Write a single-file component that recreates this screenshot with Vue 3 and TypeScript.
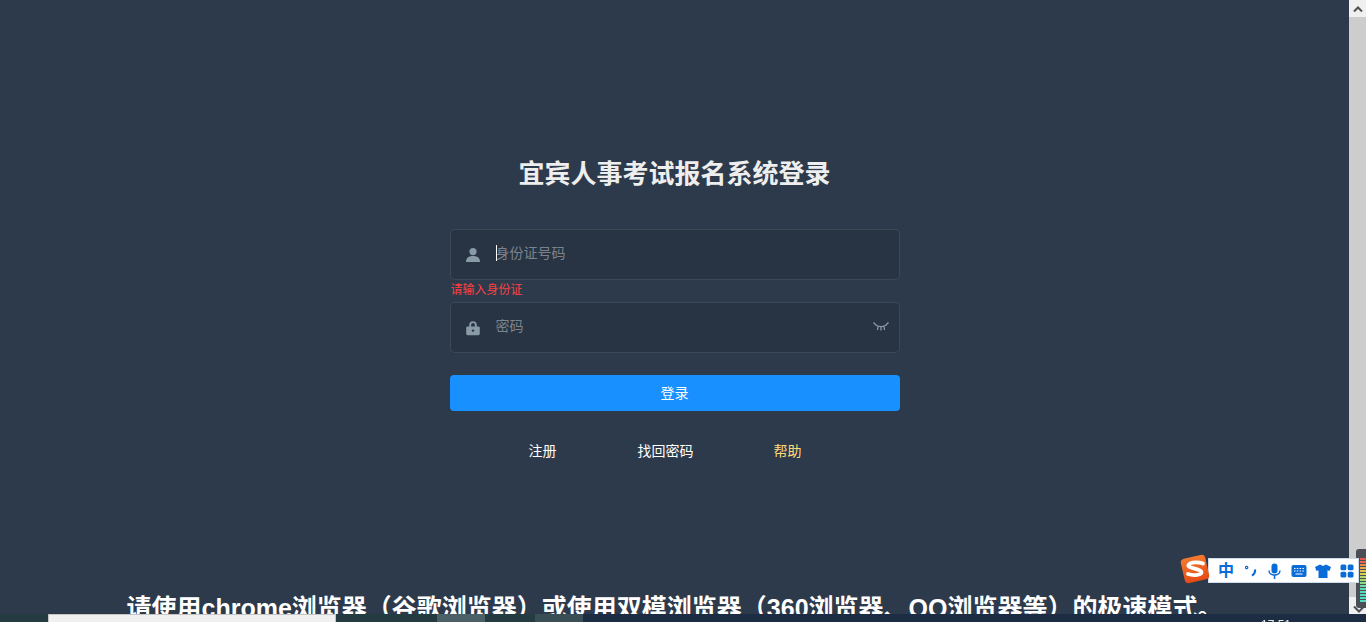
<script setup lang="ts">
const links = [
  { text: '注册', cls: 'link' },
  { text: '找回密码', cls: 'link' },
  { text: '帮助', cls: 'link help' },
]
const meter = ['#e5574f', '#e5664f', '#e58a4f', '#e5a84f', '#e5c04f', '#d8d050', '#b8d660', '#a0d870', '#86d98a', '#6fdaa0', '#5fdab0', '#55dabb', '#50dac0', '#50dac0', '#50dac0']
</script>

<template>
  <div class="screen">
    <main class="page">
      <h3 class="title">宜宾人事考试报名系统登录</h3>
      <form class="form" @submit.prevent>
        <div class="field">
          <svg class="ico" viewBox="0 0 16 16" width="16" height="16">
            <circle cx="8" cy="4.6" r="3.6" fill="#889aa4" />
            <path d="M1 15c0-4 2.4-6 7-6s7 2 7 6z" fill="#889aa4" />
          </svg>
          <span class="caret"></span>
          <span class="ph">身份证号码</span>
        </div>
        <div class="err">请输入身份证</div>
        <div class="field">
          <svg class="ico" viewBox="0 0 16 16" width="16" height="16">
            <path d="M4.2 7V5a3.8 3.8 0 0 1 7.6 0v2h-1.9V5a1.9 1.9 0 0 0-3.8 0v2z" fill="#889aa4" />
            <rect x="1.2" y="6.6" width="13.6" height="8.6" rx="1.4" fill="#889aa4" />
            <circle cx="8" cy="10.6" r="1.2" fill="#283443" />
          </svg>
          <span class="ph">密码</span>
          <svg class="eye" viewBox="0 0 16 9" width="16" height="9" fill="none" stroke="#8d9fa9" stroke-width="1.2">
            <path d="M0.5 0.5 3.500 3.500c3 1.400 6 1.400 9 0l3-3M5 4.500 4.500 8M8 5V8.500M11 4.500l.5 3.500" />
          </svg>
        </div>
        <button class="submit" type="button">登录</button>
      </form>
      <nav class="links">
        <span v-for="l in links" :key="l.text" :class="l.cls">{{ l.text }}</span>
      </nav>
      <h2 class="notice">请使用chrome浏览器（谷歌浏览器）或使用双模浏览器（360浏览器、QQ浏览器等）的极速模式。</h2>
    </main>
    <aside class="scrollbar">
      <div class="arrow">
        <svg viewBox="0 0 10 6" width="10" height="6"><path d="M1 5.500 5 1.500l4 4" fill="none" stroke="#505050" stroke-width="2" /></svg>
      </div>
      <div class="arrow end"></div>
    </aside>

    <div class="taskbar">
      <div class="win-box"></div>
      <div class="task t1"></div>
      <div class="task t2"></div>
      <span class="clock">17:51</span>
    </div>

    <div class="volume">
      <i v-for="(c, n) in meter" :key="n" class="tick" :style="{ background: c }"></i>
      <svg class="vol-arrow" viewBox="0 0 12 8" width="12" height="8"><path d="M1 1.500 6 6.500l5-5" fill="none" stroke="#4a4f55" stroke-width="2" /></svg>
    </div>

    <div class="ime">
      <svg class="ime-logo" viewBox="0 0 30 30" width="30" height="30">
        <defs>
          <linearGradient id="sg" x1="0" y1="0" x2="0" y2="1">
            <stop offset="0" stop-color="#f47a30" />
            <stop offset="1" stop-color="#e44a16" />
          </linearGradient>
        </defs>
        <rect x="2.500" y="2.500" width="25" height="25" rx="4" fill="url(#sg)" transform="rotate(-13 15 15)" />
        <path d="M23 9.500C18 7.500 10 8 8.500 11c-1.500 3.500 12.500 3.500 13 7 .4 3-7.500 4-13.500 2" fill="none" stroke="#fff" stroke-width="3.800" stroke-linecap="round" />
      </svg>
      <span class="ime-zh">中</span>
      <svg viewBox="0 0 13 13" width="13" height="13" fill="none" stroke="#0a6cd6">
        <circle cx="1.600" cy="3.500" r="1.200" stroke-width="1.200" />
        <path d="M10 5.500c.4 2.500-.6 4.500-3 6" stroke-width="2.200" />
      </svg>
      <svg viewBox="0 0 13 16" width="13" height="16" fill="#0a6cd6">
        <rect x="3.500" y="0.500" width="6" height="10" rx="3" />
        <path d="M1 7.500c0 6 11 6 11 0" fill="none" stroke="#0a6cd6" stroke-width="1.400" />
        <rect x="5.800" y="12" width="1.500" height="4" />
      </svg>
      <svg viewBox="0 0 16 14" width="16" height="14">
        <rect x="0.500" y="1" width="15" height="12" rx="2" fill="#0a6cd6" />
        <path d="M3 4.500h1.500M5.800 4.500h1.500M8.600 4.500h1.500M11.400 4.500h1.500M3 7h1.500M5.800 7h1.500M8.600 7h1.500M11.400 7h1.500M4.500 10h7" stroke="#fff" stroke-width="1.200" />
      </svg>
      <svg class="shirt" viewBox="0 0 16 14" width="16" height="14">
        <path d="M5 0.500 8 2l3-1.500 5 2.500-1.500 4-2-.7V14H3.500V6.300l-2 .7L0 3z" fill="#0a6cd6" />
      </svg>
      <svg class="grid" viewBox="0 0 14 14" width="14" height="14" fill="#0a6cd6">
        <rect x="0.500" y="0.500" width="5.800" height="5.800" rx="1.500" />
        <rect x="7.700" y="0.500" width="5.800" height="5.800" rx="1.500" />
        <rect x="0.500" y="7.700" width="5.800" height="5.800" rx="1.500" />
        <rect x="7.700" y="7.700" width="5.800" height="5.800" rx="1.500" />
      </svg>
    </div>
  </div>
</template>

<style>
html, body { margin: 0; height: 100%; overflow: hidden; }
</style>

<style scoped>
.screen {
  display: flex;
  height: 622px;
  overflow: hidden;
  font-family: "Liberation Sans", "Noto Sans CJK SC", sans-serif;
}
.page {
  flex: 1;
  background: #2d3a4b;
  display: flex;
  flex-direction: column;
  align-items: center;
  min-width: 0;
}
.title {
  margin: 158px 0 0;
  font-size: 26px;
  line-height: 32px;
  font-weight: 700;
  color: #eeeeee;
}
.form {
  width: 450px;
  margin-top: 39px;
  display: flex;
  flex-direction: column;
}
.field {
  height: 51px;
  box-sizing: border-box;
  border: 1px solid rgba(255, 255, 255, 0.1);
  border-radius: 5px;
  background: #283443;
  display: flex;
  align-items: center;
  padding-left: 14px;
  position: relative;
  font-size: 14px;
}
.ico { flex: none; margin-right: 15px; margin-top: 1px; }
.ph { color: #7b838d; margin-top: -6px; }
.caret {
  position: absolute;
  left: 45px;
  top: 15px;
  width: 1px;
  height: 16px;
  background: #ffffff;
}
.eye { position: absolute; right: 10px; top: 19px; }
.err {
  height: 22px;
  line-height: 20px;
  padding-left: 1px;
  font-size: 12px;
  color: #ff4040;
}
.submit {
  margin-top: 22px;
  height: 36px;
  border: none;
  border-radius: 4px;
  background: #1890ff;
  color: #ffffff;
  font: inherit;
  font-size: 14px;
  padding: 0 0 2px;
}
.links {
  width: 450px;
  margin-top: 30px;
  display: flex;
  padding-left: 79px;
  box-sizing: border-box;
  font-size: 14px;
  line-height: 20px;
  color: #ffffff;
}
.link:nth-child(1) { width: 109px; }
.link:nth-child(2) { width: 136px; }
.help { color: #ffd97a; }
.notice {
  margin: 131px 0 0;
  font-size: 25px;
  line-height: 32px;
  font-weight: 700;
  color: #ffffff;
  white-space: nowrap;
}
.scrollbar {
  width: 17px;
  flex: none;
  background: #cdcdcd;
  display: flex;
  flex-direction: column;
  justify-content: space-between;
  padding-bottom: 8px;
}
.arrow {
  height: 17px;
  background: #f0f0f0;
  display: flex;
  align-items: center;
  justify-content: center;
}
.taskbar {
  position: fixed;
  left: 0;
  right: 0;
  bottom: 0;
  height: 8px;
  background: linear-gradient(90deg, #243b42 0 583px, #1c2c42 583px);
}
.win-box {
  position: absolute;
  left: 48px;
  top: 0;
  width: 288px;
  height: 8px;
  box-sizing: border-box;
  background: #f0f0f0;
  border: 1px solid #c4c4c4;
  border-bottom: none;
}
.task { position: absolute; top: 0; height: 8px; }
.t1 { left: 437px; width: 48px; background: #4c6068; }
.t2 { left: 535px; width: 48px; background: #3a4e56; }
.clock {
  position: absolute;
  left: 1261px;
  top: 3px;
  font-size: 12px;
  line-height: 16px;
  color: #e8e8e8;
}
.ime {
  position: fixed;
  left: 1208px;
  top: 558px;
  width: 151px;
  height: 25px;
  box-sizing: border-box;
  border: 1px solid #cfdcec;
  background: #ffffff;
  display: flex;
  align-items: center;
  gap: 10px;
  padding-left: 9px;
}
.ime-logo { position: absolute; left: -29px; top: -5px; }
.ime-zh { color: #0a6cd6; font-size: 16px; font-weight: 700; line-height: 16px; margin-right: 1px; }
.shirt { margin-left: -2px; }
.grid { margin-left: -1px; }
.volume {
  position: fixed;
  left: 1356px;
  top: 549px;
  width: 10px;
  height: 59px;
  box-sizing: border-box;
  background: #4a4f55;
  border-radius: 3px 0 0 3px;
  padding: 9px 0 0 4px;
  display: flex;
  flex-direction: column;
  gap: 1px;
}
.tick { display: block; height: 2px; flex: none; }
.vol-arrow { position: absolute; left: -3px; bottom: -5px; }
</style>
